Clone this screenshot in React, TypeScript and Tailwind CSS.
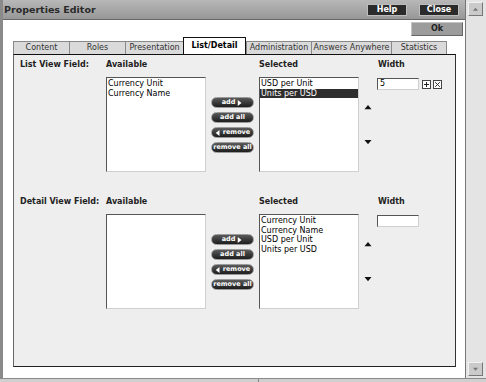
import React from 'react';

const tabs = [
  { label: 'Content', w: 'w-[56px]' },
  { label: 'Roles', w: 'w-[56px]' },
  { label: 'Presentation', w: 'w-[58px]' },
  { label: 'List/Detail', w: 'w-[63px]', active: true },
  { label: 'Administration', w: 'w-[65px]' },
  { label: 'Answers Anywhere', w: 'w-[80px]' },
  { label: 'Statistics', w: 'w-[56px]' },
];

const Tri: React.FC<{ dir: 'up' | 'down' | 'left' | 'right'; className?: string }> = ({ dir, className }) => {
  const pts = {
    up: '0,6 4,1 8,6',
    down: '0,1 4,6 8,1',
    left: '6,0 1,4 6,8',
    right: '1,0 6,4 1,8',
  }[dir];
  return (
    <svg viewBox="0 0 8 8" className={className}>
      <polygon points={pts} fill="currentColor" />
    </svg>
  );
};

const Pill: React.FC<{ children: React.ReactNode }> = ({ children }) => (
  <div className="flex h-[11px] w-[43px] items-center justify-center gap-[2px] rounded-full border border-[#9a9a9a] bg-gradient-to-b from-[#5a5a5a] to-[#1e1e1e] text-[6.5px] font-bold leading-none text-white">
    {children}
  </div>
);

const ListBox: React.FC<{ items: string[]; selected?: number }> = ({ items, selected }) => (
  <div className="h-[95px] w-[100px] border border-t-[#555] border-l-[#555] border-b-[#cfcfcf] border-r-[#cfcfcf] bg-white pt-[1px] text-[8px] leading-[9.5px] text-black">
    {items.map((it, i) => (
      <div key={it} className={i === selected ? 'bg-[#2e2e2e] pl-[1px] text-white' : 'pl-[1px]'}>
        {it}
      </div>
    ))}
  </div>
);

const Section: React.FC<{ label: string; available: string[]; selected: string[]; sel?: number; width: string }> = ({
  label,
  available,
  selected,
  sel,
  width,
}) => (
  <div className="flex flex-col">
    <div className="flex h-[12px] items-center text-[8px] font-bold text-[#222]">
      <div className="w-[86px]">{label}</div>
      <div className="w-[153px]">Available</div>
      <div className="w-[119px]">Selected</div>
      <div>Width</div>
    </div>
    <div className="mt-[6px] flex">
      <div className="w-[86px]" />
      <ListBox items={available} />
      <div className="ml-[5px] mr-[5px] flex flex-col gap-[4px] pt-[20px]">
        <Pill>
          add <Tri dir="right" className="h-[6px] w-[6px]" />
        </Pill>
        <Pill>add all</Pill>
        <Pill>
          <Tri dir="left" className="h-[6px] w-[6px]" /> remove
        </Pill>
        <Pill>remove all</Pill>
      </div>
      <ListBox items={selected} selected={sel} />
      <div className="flex w-[18px] flex-col items-center pt-[27px] text-[#111]">
        <Tri dir="up" className="h-[7px] w-[8px]" />
        <div className="h-[28px]" />
        <Tri dir="down" className="h-[7px] w-[8px]" />
      </div>
      <div className="flex items-start gap-[3px] pt-[1px]">
        <div className="flex h-[12px] w-[42px] items-center border border-t-[#555] border-l-[#555] border-b-[#cfcfcf] border-r-[#cfcfcf] bg-white pl-[2px] text-[8px] text-black">
          {width}
        </div>
        {width && (
          <div className="flex gap-[2px] pt-[2px]">
            <svg viewBox="0 0 9 9" className="h-[9px] w-[9px]">
              <rect x="0.5" y="0.5" width="8" height="8" fill="white" stroke="#444" />
              <path d="M4.5 2v5M2 4.5h5" stroke="#222" />
            </svg>
            <svg viewBox="0 0 9 9" className="h-[9px] w-[9px]">
              <rect x="0.5" y="0.5" width="8" height="8" fill="white" stroke="#444" />
              <path d="M2.2 2.2l4.6 4.6M6.8 2.2l-4.6 4.6" stroke="#333" />
            </svg>
          </div>
        )}
      </div>
    </div>
  </div>
);

export default function App() {
  return (
    <div className="flex h-[382px] w-[486px] flex-col bg-[#d0d0d0] font-['DejaVu_Sans',Verdana,sans-serif]">
      <div className="flex h-[378px]">
        {/* main window */}
        <div className="flex w-[465px] flex-col border-l-[3px] border-l-[#8a8a8a] bg-white">
          <div className="flex h-[20px] items-center border-b border-b-[#666] bg-gradient-to-b from-[#b8b8b8] to-[#979797] pl-[1px] pr-[6px] pt-[1px]">
            <span className="text-[9.5px] font-bold text-[#2a2a2a]">Properties Editor</span>
            <div className="ml-auto flex gap-[12px]">
              <div className="flex h-[12px] w-[40px] items-center justify-center border border-[#bdbdbd] bg-[#2b2b2b] text-[8px] font-bold text-white">
                Help
              </div>
              <div className="flex h-[12px] w-[40px] items-center justify-center border border-[#bdbdbd] bg-[#2b2b2b] text-[8px] font-bold text-white">
                Close
              </div>
            </div>
          </div>
          <div className="flex h-[17px] items-start justify-end pr-[2px] pt-[2px]">
            <div className="flex h-[14px] w-[52px] items-center justify-center border border-t-[#c4c4c4] border-l-[#c4c4c4] border-b-[#666] border-r-[#666] bg-[#9c9c9c] text-[8px] font-bold text-[#222]">
              Ok
            </div>
          </div>
          <div className="ml-[10px] flex h-[17px] items-end">
            {tabs.map((t, i) =>
              t.active ? (
                <div
                  key={t.label}
                  className={`${t.w} flex h-[17px] items-center justify-center border-x border-t border-[#111] bg-white text-[8px] font-bold text-black`}
                >
                  {t.label}
                </div>
              ) : (
                <div
                  key={t.label}
                  className={`${t.w} flex h-[13px] items-center justify-center border-t border-l border-[#888] bg-[#dadada] text-[8px] text-[#333] ${i === tabs.length - 1 ? 'border-r' : ''}`}
                >
                  {t.label}
                </div>
              ),
            )}
          </div>
          <div className="ml-[10px] flex h-[313px] w-[443px] flex-col gap-[24px] border border-t-[#111] border-l-[#666] border-r-[#333] border-b-[#222] bg-[#eeeeee] pl-[6px] pt-[4px]">
            <Section
              label="List View Field:"
              available={['Currency Unit', 'Currency Name']}
              selected={['USD per Unit', 'Units per USD']}
              sel={1}
              width="5"
            />
            <Section
              label="Detail View Field:"
              available={[]}
              selected={['Currency Unit', 'Currency Name', 'USD per Unit', 'Units per USD']}
              width=""
            />
          </div>
        </div>
        {/* scrollbar */}
        <div className="flex w-[21px] flex-col justify-between border-l border-l-[#777] bg-[#e4e4e4] py-[2px] pl-[2px]">
          <div className="flex h-[14px] w-[15px] items-center justify-center border border-t-[#f2f2f2] border-l-[#f2f2f2] border-b-[#777] border-r-[#777] bg-[#cacaca] text-[#777]">
            <Tri dir="up" className="h-[5px] w-[7px]" />
          </div>
          <div className="flex h-[14px] w-[15px] items-center justify-center border border-t-[#f2f2f2] border-l-[#f2f2f2] border-b-[#777] border-r-[#777] bg-[#cacaca] text-[#777]">
            <Tri dir="down" className="h-[5px] w-[7px]" />
          </div>
        </div>
      </div>
      <div className="flex h-[4px] border-t border-t-[#8a8a8a] bg-[#cfcfcf]">
        <div className="w-[259px] border-r border-r-[#888]" />
      </div>
    </div>
  );
}
